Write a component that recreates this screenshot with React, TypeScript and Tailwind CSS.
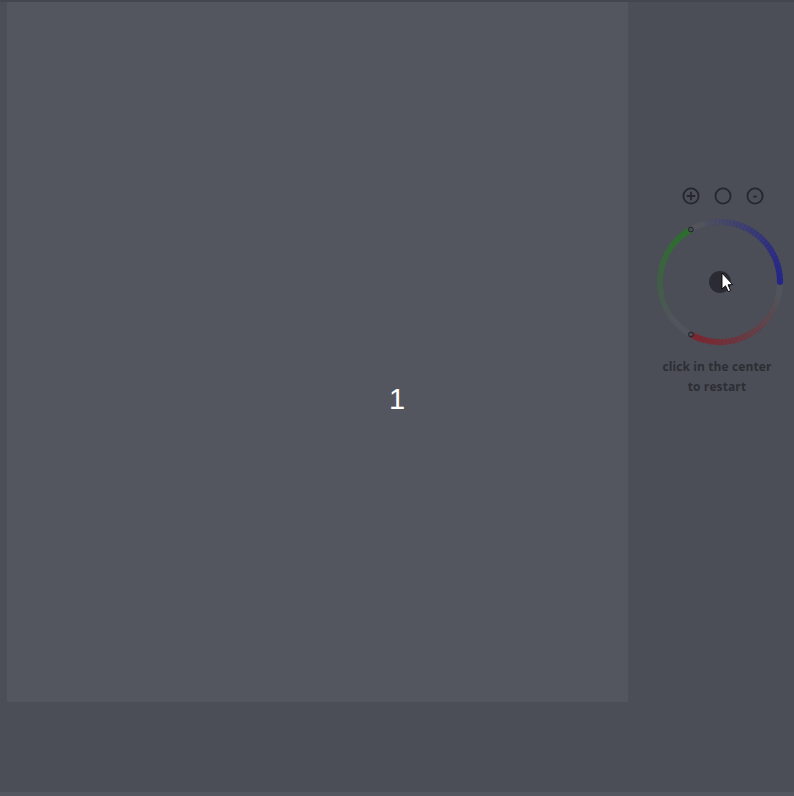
import React from "react";

function arcPath(cx: number, cy: number, r: number, a0: number, a1: number) {
  const rad = (d: number) => (d * Math.PI) / 180;
  const x0 = cx + r * Math.cos(rad(a0));
  const y0 = cy + r * Math.sin(rad(a0));
  const x1 = cx + r * Math.cos(rad(a1));
  const y1 = cy + r * Math.sin(rad(a1));
  const large = Math.abs(a1 - a0) > 180 ? 1 : 0;
  const sweep = a1 > a0 ? 1 : 0;
  return `M ${x0} ${y0} A ${r} ${r} 0 ${large} ${sweep} ${x1} ${y1}`;
}

const R = 60;
const C = 65;

function GradientArc({
  from,
  to,
  color,
  o0,
  o1,
  steps = 30,
}: {
  from: number;
  to: number;
  color: string;
  o0: number;
  o1: number;
  steps?: number;
}) {
  const segs = [];
  for (let i = 0; i < steps; i++) {
    const a = from + ((to - from) * i) / steps;
    const b = from + ((to - from) * (i + 1.15)) / steps;
    const t = i / (steps - 1);
    segs.push(
      <path
        key={i}
        d={arcPath(C, C, R, a, b)}
        stroke={color}
        strokeOpacity={o0 + (o1 - o0) * t}
        strokeWidth={6}
        fill="none"
      />
    );
  }
  return <g>{segs}</g>;
}

function Wheel() {
  const m = (deg: number) => ({
    cx: C + R * Math.cos((deg * Math.PI) / 180),
    cy: C + R * Math.sin((deg * Math.PI) / 180),
  });
  return (
    <svg width="130" height="130" viewBox="0 0 130 130">
      <circle cx={C} cy={C} r={R} fill="none" stroke="#ffffff" strokeOpacity={0.035} strokeWidth={6} />
      <GradientArc from={-105} to={0} color="#25258a" o0={0.08} o1={1} />
      <path d={arcPath(C, C, R, -1, 0)} stroke="#25258a" strokeWidth={6} strokeLinecap="round" fill="none" />
      <GradientArc from={-119} to={-215} color="#2c6e2c" o0={1} o1={0.04} />
      <GradientArc from={119} to={15} color="#7c2530" o0={1} o1={0.03} />
      <circle {...m(-119)} r="2.4" fill="#4b4e56" stroke="#1f2126" strokeWidth={1} />
      <circle {...m(119)} r="2.4" fill="#4b4e56" stroke="#1f2126" strokeWidth={1} />
      <circle cx={C} cy={C} r="11" fill="#2a2b33" />
      <path
        d="M67 56 L67 72 L70.5 68.8 L73.2 74.6 L75.6 73.5 L73 67.8 L77.6 67.6 Z"
        fill="#ffffff"
        stroke="#000000"
        strokeWidth={0.9}
        strokeLinejoin="round"
      />
    </svg>
  );
}

export default function App() {
  return (
    <div className="relative h-[796px] w-[794px] bg-[#4b4e56] border-t-2 border-[#44464e] flex flex-col overflow-hidden">
      <div className="flex flex-1">
        <div className="ml-[7px] w-[621px] h-[700px] bg-[#53565e]" />
        <div className="w-[166px] pl-[19px] pt-[185px] flex flex-col items-center">
          <div className="flex items-center gap-[14px] ml-[4px]">
            <svg width="18" height="18" viewBox="0 0 18 18">
              <circle cx="9" cy="9" r="7.6" fill="none" stroke="#25272d" strokeWidth="1.8" />
              <path d="M9 4.8 V13.2 M4.8 9 H13.2" stroke="#25272d" strokeWidth="1.8" />
            </svg>
            <svg width="18" height="18" viewBox="0 0 18 18">
              <circle cx="9" cy="9" r="7.6" fill="none" stroke="#25272d" strokeWidth="1.8" />
            </svg>
            <svg width="18" height="18" viewBox="0 0 18 18">
              <circle cx="9" cy="9" r="7.6" fill="none" stroke="#25272d" strokeWidth="1.8" />
              <path d="M7.2 9.6 H10.8" stroke="#25272d" strokeWidth="1.8" />
            </svg>
          </div>
          <div className="mt-[12px] mr-[1px]">
            <Wheel />
          </div>
          <p
            className="mt-[10px] mr-[7px] text-center text-[12px] leading-[20px] font-bold text-[#2c2e35] tracking-[0.1px]"
            style={{ fontFamily: '"Open Sans", "Liberation Sans", sans-serif' }}
          >
            click in the center
            <br />
            to restart
          </p>
        </div>
      </div>
      <div className="h-[4px] bg-[#53565e]" />
      <span
        className="absolute left-1/2 top-1/2 -translate-x-1/2 -translate-y-1/2 text-white text-[29px] leading-none"
        style={{ fontFamily: '"Liberation Sans", Arial, sans-serif' }}
      >
        1
      </span>
    </div>
  );
}
